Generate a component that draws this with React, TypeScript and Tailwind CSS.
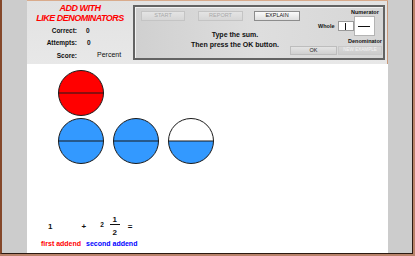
import React from 'react'

const FONT = { fontFamily: '"Liberation Sans", Arial, sans-serif' }

function HalfCircle({ top, bottom }: { top: string; bottom: string }) {
  return (
    <svg width="46" height="46" viewBox="0 0 46 46" className="block">
      <path d="M0.5 23 A22.5 22.5 0 0 1 45.5 23 Z" fill={top} />
      <path d="M0.5 23 A22.5 22.5 0 0 0 45.5 23 Z" fill={bottom} />
      <circle cx="23" cy="23" r="22.5" fill="none" stroke="#1a1a1a" strokeWidth="1" />
      <line x1="0.5" y1="23" x2="45.5" y2="23" stroke="#1a1a1a" strokeWidth="1.2" />
    </svg>
  )
}

function Btn({ label, width, enabled }: { label: string; width: string; enabled?: boolean }) {
  return (
    <div
      className={`${width} h-[10px] flex items-center justify-center text-[5.5px] leading-none border ${
        enabled
          ? 'border-[#8c8c8c] bg-linear-to-b from-[#fafafa] to-[#dedede] text-[#222]'
          : 'border-[#c4c4c4] bg-linear-to-b from-[#e4e4e4] to-[#d6d6d6] text-[#a8a8a8]'
      }`}
    >
      {label}
    </div>
  )
}

export default function App() {
  return (
    <div className="w-[415px] h-[256px] bg-[#b9826a] overflow-hidden" style={FONT}>
      <div className="w-[413px] h-[254px] flex border-l-2 border-[#84472a] border-r border-b border-r-[#2b1a12] border-b-[#2b1a12]">
        {/* left gutter */}
        <div className="w-[25px] bg-[#cccccc]" />

        {/* center */}
        <div className="w-[361px] flex flex-col">
          {/* header */}
          <div className="h-[64px] flex bg-linear-to-b from-[#e2e2e2] to-[#e8e8e8] border-t border-[#d9ab8c]">
            {/* title + score */}
            <div className="w-[106px] flex flex-col">
              <div className="pt-[2px] text-center text-[9px] leading-[10px] font-bold italic text-[#ff0000] tracking-[-0.5px]">
                <div>ADD WITH</div>
                <div>LIKE DENOMINATORS</div>
              </div>
              <div className="mt-[2px] text-[6.5px] font-bold text-[#111]">
                <div className="flex h-[12px] items-center">
                  <span className="w-[50px] text-right">Correct:</span>
                  <span className="ml-[9px]">0</span>
                </div>
                <div className="flex h-[12px] items-center">
                  <span className="w-[50px] text-right">Attempts:</span>
                  <span className="ml-[10px]">0</span>
                </div>
                <div className="flex h-[13px] items-center">
                  <span className="w-[50px] text-right">Score:</span>
                  <span className="ml-[20px] font-normal text-[7px]">Percent</span>
                </div>
              </div>
            </div>

            {/* control panel */}
            <div className="mt-[4px] w-[252px] h-[55px] flex border-2 border-[#636363] bg-linear-to-r from-[#d0d0d0] via-[#dedede] to-[#d6d6d6] shadow-[inset_1px_1px_0_#f2f2f2]">
              <div className="w-[166px] flex flex-col">
                <div className="pt-[4px] pl-[6px] flex">
                  <Btn label="START" width="w-[44px]" />
                  <div className="ml-[13px]">
                    <Btn label="REPORT" width="w-[45px]" />
                  </div>
                  <div className="ml-[11px]">
                    <Btn label="EXPLAIN" width="w-[46px]" enabled />
                  </div>
                </div>
                <div className="mt-[9px] pl-[34px] text-center text-[7px] leading-[10px] font-bold text-[#111] whitespace-nowrap">
                  <div>Type the sum.</div>
                  <div>Then press the OK button.</div>
                </div>
              </div>

              <div className="w-[82px] flex flex-col text-[5.5px] font-bold text-[#111]">
                <div className="ml-[50px] pt-[1px] h-[9px] leading-[8px]">Numerator</div>
                <div className="flex items-center h-[20px]">
                  <span className="ml-[17px]">Whole</span>
                  <div className="ml-[3px] w-[16px] h-[10px] bg-white border border-[#9a9a9a] flex items-center justify-center">
                    <div className="w-px h-[7px] bg-[#111]" />
                  </div>
                  <div className="w-[21px] h-[20px] bg-white border border-[#b4b4b4] flex items-center justify-center">
                    <div className="w-[12px] h-px bg-[#111]" />
                  </div>
                </div>
                <div className="ml-[47px] mt-[1px] h-[8px] leading-[8px]">Denominator</div>
                <div className="-ml-[11px] mt-[1px] flex gap-[1px] font-normal">
                  <div className="w-[47px] h-[9px] flex items-center justify-center text-[5.5px] border border-[#bdbdbd] bg-linear-to-b from-[#e4e4e4] to-[#d0d0d0] text-[#222]">
                    OK
                  </div>
                  <div className="w-[44px] h-[9px] flex items-center justify-center text-[4.6px] border border-[#c8c8c8] bg-linear-to-b from-[#d8d8d8] to-[#cccccc] text-[#f2f2f2]">
                    NEW EXAMPLE
                  </div>
                </div>
              </div>
            </div>
            <div className="flex-1 border-r border-[#c99a7c]" />
          </div>

          {/* work area */}
          <div className="flex-1 bg-white">
            <div className="pl-[31px] pt-[6px]">
              <HalfCircle top="#ff0000" bottom="#ff0000" />
              <div className="mt-[2px] flex gap-[9px]">
                <HalfCircle top="#3399ff" bottom="#3399ff" />
                <HalfCircle top="#3399ff" bottom="#3399ff" />
                <HalfCircle top="#ffffff" bottom="#3399ff" />
              </div>
            </div>

            <div className="mt-[52px] pl-[21px] flex items-center text-[8px] font-bold text-[#111] leading-[8px]">
              <span>1</span>
              <span className="ml-[29px]">+</span>
              <span className="ml-[14px] text-[6.5px] -mt-[3px]">2</span>
              <div className="ml-[6px] w-[10px] flex flex-col items-center">
                <span className="h-[8px]">1</span>
                <div className="w-[10px] h-px bg-[#111]" />
                <span className="mt-[4px] h-[8px]">2</span>
              </div>
              <span className="ml-[8px]">=</span>
            </div>

            <div className="mt-[3px] pl-[14px] flex gap-[5px] text-[7px] font-bold leading-[8px]">
              <span className="text-[#ff0000]">first addend</span>
              <span className="text-[#0000ff]">second addend</span>
            </div>
          </div>
        </div>

        {/* right gutter */}
        <div className="w-[24px] bg-[#cccccc]" />
      </div>
    </div>
  )
}
